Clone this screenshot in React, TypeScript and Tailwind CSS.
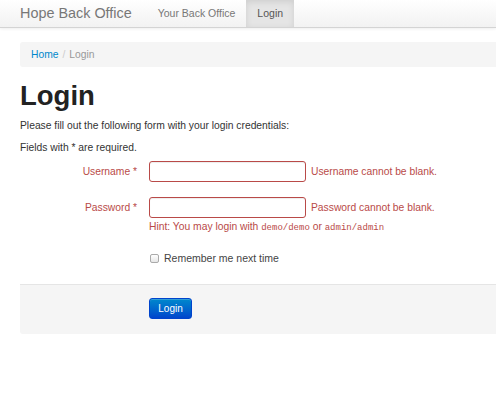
import React from "react";

export default function App() {
  return (
    <div className="min-h-[400px] w-[496px] overflow-hidden bg-white text-[10.3px] text-[#333]" style={{ fontFamily: '"Liberation Sans", Arial, sans-serif' }}>
      {/* navbar */}
      <div className="flex h-[28px] items-stretch border-b border-[#d4d4d4] bg-gradient-to-b from-white to-[#f2f2f2] shadow-[0_1px_3px_rgba(0,0,0,0.07)]">
        <div className="flex items-center pl-[20px] pr-[15px] text-[14.4px] text-[#777]">Hope Back Office</div>
        <div className="flex items-center px-[11px] text-[10.5px] text-[#777]">Your Back Office</div>
        <div className="flex items-center bg-[#e5e5e5] px-[11px] text-[10.5px] text-[#555] shadow-[inset_0_2px_6px_rgba(0,0,0,0.1)]">Login</div>
      </div>

      <div className="pl-[20px]">
        {/* breadcrumb */}
        <div className="mt-[14px] flex h-[25px] w-[600px] items-center rounded-[3px] bg-[#f5f5f5] pl-[11px]">
          <span className="text-[#0088cc]">Home</span>
          <span className="mx-[4px] text-[#ccc]">/</span>
          <span className="text-[#999]">Login</span>
        </div>

        <h1 className="mt-[13px] text-[27.5px] font-bold leading-[32px] text-[#222]">Login</h1>
        <p className="mt-[7px] leading-[14px]">Please fill out the following form with your login credentials:</p>
        <p className="mt-[8px] leading-[14px]">Fields with * are required.</p>

        {/* username */}
        <div className="mt-[6px] flex items-center">
          <label className="w-[117px] text-right text-[#b94a48]">Username *</label>
          <input className="ml-[12px] h-[21px] w-[157px] rounded-[3px] border border-[#b94a48] shadow-[inset_0_1px_1px_rgba(0,0,0,0.075)] outline-none" />
          <span className="ml-[5px] text-[#b94a48]">Username cannot be blank.</span>
        </div>

        {/* password */}
        <div className="mt-[15px] flex items-center">
          <label className="w-[117px] text-right text-[#b94a48]">Password *</label>
          <input type="password" className="ml-[12px] h-[21px] w-[157px] rounded-[3px] border border-[#b94a48] shadow-[inset_0_1px_1px_rgba(0,0,0,0.075)] outline-none" />
          <span className="ml-[5px] text-[#b94a48]">Password cannot be blank.</span>
        </div>
        <div className="ml-[129px] mt-[3px] leading-[12px] text-[#b94a48]">
          Hint: You may login with <code style={{ fontFamily: '"Liberation Mono", monospace' }} className="text-[9px]">demo/demo</code> or <code style={{ fontFamily: '"Liberation Mono", monospace' }} className="text-[9px]">admin/admin</code>
        </div>

        {/* remember */}
        <div className="ml-[130px] mt-[17px] flex items-center">
          <span className="h-[9px] w-[9px] rounded-[2px] border border-[#aaa] bg-gradient-to-b from-white to-[#e6e6e6]" />
          <span className="ml-[5px] text-[10.5px] text-[#444]">Remember me next time</span>
        </div>

        {/* actions */}
        <div className="mt-[17px] h-[50px] w-[600px] rounded-b-[3px] border-t border-[#e5e5e5] bg-[#f5f5f5] pl-[129px] pt-[13px]">
          <button className="h-[21px] w-[43px] rounded-[3px] border border-[#0044cc] bg-gradient-to-b from-[#0088cc] to-[#0044cc] text-[10px] text-white shadow-[inset_0_1px_0_rgba(255,255,255,0.2)]">Login</button>
        </div>
      </div>
    </div>
  );
}
